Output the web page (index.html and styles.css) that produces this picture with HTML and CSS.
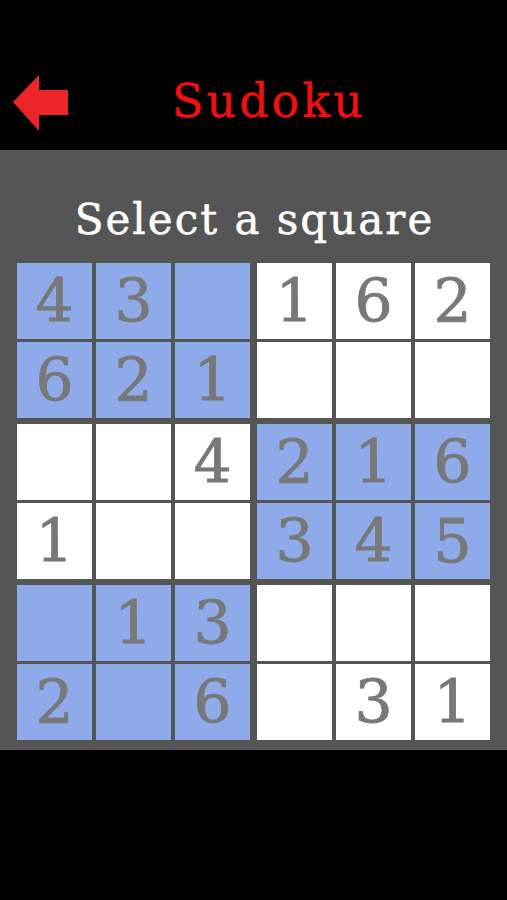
FILE: index.html
```html
<!DOCTYPE html>
<html>
<head>
<meta charset="utf-8">
<link rel="stylesheet" href="styles.css">
</head>
<body>
<header class="topbar">
  <svg class="back" width="58" height="58" viewBox="0 0 58 58">
    <path d="M1 27 L27 0 L27 15 L56 15 L56 40 L27 40 L27 56 Z" fill="#ec2529"/>
  </svg>
  <h1 class="title">Sudoku</h1>
</header>
<main class="panel">
  <h2 class="prompt">Select a square</h2>
  <div class="board">
    <div class="box blue">
      <div class="cell">4</div><div class="cell">3</div><div class="cell"></div>
      <div class="cell">6</div><div class="cell">2</div><div class="cell">1</div>
    </div>
    <div class="box">
      <div class="cell">1</div><div class="cell">6</div><div class="cell">2</div>
      <div class="cell"></div><div class="cell"></div><div class="cell"></div>
    </div>
    <div class="box">
      <div class="cell"></div><div class="cell"></div><div class="cell">4</div>
      <div class="cell">1</div><div class="cell"></div><div class="cell"></div>
    </div>
    <div class="box blue">
      <div class="cell">2</div><div class="cell">1</div><div class="cell">6</div>
      <div class="cell">3</div><div class="cell">4</div><div class="cell">5</div>
    </div>
    <div class="box blue">
      <div class="cell"></div><div class="cell">1</div><div class="cell">3</div>
      <div class="cell">2</div><div class="cell"></div><div class="cell">6</div>
    </div>
    <div class="box">
      <div class="cell"></div><div class="cell"></div><div class="cell"></div>
      <div class="cell"></div><div class="cell">3</div><div class="cell">1</div>
    </div>
  </div>
</main>
</body>
</html>
```
FILE: styles.css
```css
html, body {
  margin: 0;
  padding: 0;
  background: #000;
}
body {
  width: 507px;
  height: 900px;
  font-family: "DejaVu Serif", "Liberation Serif", serif;
}
.topbar {
  height: 150px;
  display: flex;
  align-items: flex-start;
  box-sizing: border-box;
  padding-left: 12px;
}
.back {
  margin-top: 75px;
  flex: none;
}
.title {
  margin: 0;
  margin-left: 102px;
  margin-top: 74px;
  font-size: 46px;
  line-height: 54px;
  font-weight: normal;
  letter-spacing: 3px;
  color: #f01010;
  -webkit-text-stroke: 0.4px #f01010;
}
.panel {
  background: #555555;
  height: 600px;
  box-sizing: border-box;
  padding: 0 17px;
  display: flex;
  flex-direction: column;
}
.prompt {
  margin: 0;
  height: 113px;
  box-sizing: border-box;
  padding-top: 46px;
  padding-left: 2px;
  text-align: center;
  color: #fff;
  font-size: 42px;
  line-height: 48px;
  font-weight: normal;
  letter-spacing: 2px;
  -webkit-text-stroke: 0.5px #fff;
}
.board {
  display: grid;
  grid-template-columns: 233px 233px;
  column-gap: 7px;
  row-gap: 6px;
}
.box {
  display: grid;
  grid-template-columns: 75px 75px 75px;
  grid-template-rows: 76px 76px;
  column-gap: 4px;
  row-gap: 3px;
}
.cell {
  background: #ffffff;
  color: #787878;
  font-size: 60px;
  line-height: 76px;
  text-align: center;
  -webkit-text-stroke: 0.8px #787878;
}
.blue .cell {
  background: #8eaae8;
}
```
